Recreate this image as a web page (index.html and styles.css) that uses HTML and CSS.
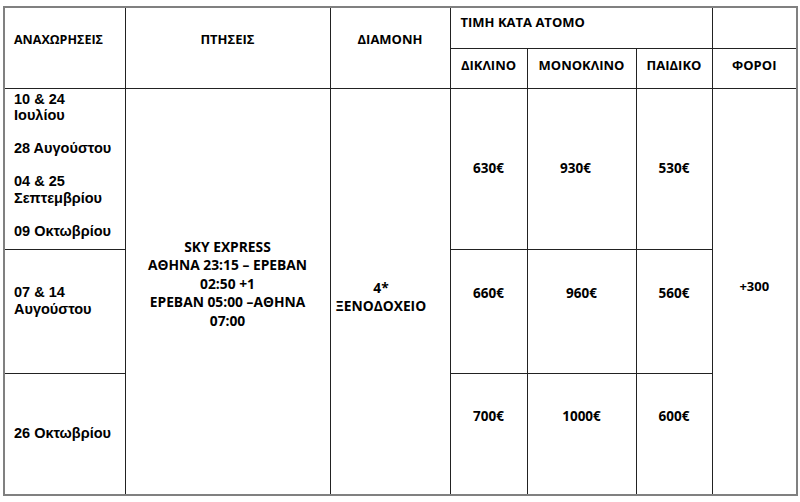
FILE: index.html
```html
<!DOCTYPE html>
<html lang="el">
<head>
<meta charset="utf-8">
<title>Τιμές</title>
<link rel="stylesheet" href="styles.css">
</head>
<body>
<table class="prices">
  <colgroup>
    <col class="c1"><col class="c2"><col class="c3"><col class="c4"><col class="c5"><col class="c6"><col class="c7">
  </colgroup>
  <tr class="r1">
    <th rowspan="2" class="h-dep">ΑΝΑΧΩΡΗΣΕΙΣ</th>
    <th rowspan="2" class="h-main">ΠΤΗΣΕΙΣ</th>
    <th rowspan="2" class="h-main">ΔΙΑΜΟΝΗ</th>
    <th colspan="3" class="h-price">ΤΙΜΗ ΚΑΤΑ ΑΤΟΜΟ</th>
    <th class="h-empty"></th>
  </tr>
  <tr class="r2">
    <th class="h-sub">ΔΙΚΛΙΝΟ</th>
    <th class="h-sub">ΜΟΝΟΚΛΙΝΟ</th>
    <th class="h-sub">ΠΑΙΔΙΚΟ</th>
    <th class="h-sub">ΦΟΡΟΙ</th>
  </tr>
  <tr class="r3">
    <td class="dates dates-1">10 &amp; 24<br>Ιουλίου<br><br>28 Αυγούστου<br><br>04 &amp; 25<br>Σεπτεμβρίου<br><br>09 Οκτωβρίου</td>
    <td rowspan="3" class="flights">SKY EXPRESS<br>ΑΘΗΝΑ 23:15 – ΕΡΕΒΑΝ<br>02:50 +1<br>ΕΡΕΒΑΝ 05:00 –ΑΘΗΝΑ<br>07:00</td>
    <td rowspan="3" class="hotel">4*<br>ΞΕΝΟΔΟΧΕΙΟ</td>
    <td class="price p1">630€</td>
    <td class="price p1 shift">930€</td>
    <td class="price p1">530€</td>
    <td rowspan="3" class="tax">+300</td>
  </tr>
  <tr class="r4">
    <td class="dates dates-2">07 &amp; 14<br>Αυγούστου</td>
    <td class="price p2">660€</td>
    <td class="price p2">960€</td>
    <td class="price p2">560€</td>
  </tr>
  <tr class="r5">
    <td class="dates dates-3">26 Οκτωβρίου</td>
    <td class="price p3">700€</td>
    <td class="price p3">1000€</td>
    <td class="price p3">600€</td>
  </tr>
</table>
</body>
</html>
```
FILE: styles.css
```css
html, body {
  margin: 0;
  padding: 0;
  background: #ffffff;
}
body {
  padding: 6px 0 0 3px;
  font-family: "Open Sans", "Liberation Sans", sans-serif;
  color: #000;
}
.prices {
  border-collapse: collapse;
  table-layout: fixed;
  width: 793px;
  border: 2px solid #808080;
}
.c1 { width: 121px; }
.c2 { width: 205px; }
.c3 { width: 120px; }
.c4 { width: 77px; }
.c5 { width: 109px; }
.c6 { width: 76px; }
.c7 { width: 85px; }
.prices th, .prices td {
  border: 1px solid #222;
  padding: 0;
  font-weight: 700;
  font-size: 13px;
  line-height: 15px;
  text-align: center;
  vertical-align: middle;
  overflow: hidden;
}
.prices .r1 { height: 41px; }
.prices .r2 { height: 40px; }
.prices .r3 { height: 161px; }
.prices .r4 { height: 124px; }
.prices .r5 { height: 122px; }
.prices .h-dep {
  font-size: 12.5px;
  text-align: left;
  padding: 0 0 17px 9px;
}
.prices .h-main { padding-bottom: 17px; }
.prices .h-price {
  text-align: left;
  padding: 0 0 11px 10px;
}
.prices .h-sub { padding-bottom: 6px; }
.prices .dates {
  font-family: "Liberation Sans", Arial, sans-serif;
  font-size: 14.5px;
  line-height: 16.6px;
  text-align: left;
  padding-left: 9px;
}
.prices .dates-1 {
  vertical-align: top;
  padding-top: 2px;
}
.prices .dates-2 { padding-bottom: 20px; }
.prices .flights {
  font-size: 13.8px;
  line-height: 18.5px;
  padding-bottom: 15px;
}
.prices .hotel {
  font-size: 13.8px;
  line-height: 18px;
  padding-top: 11px;
  padding-right: 18px;
}
.prices .price { font-size: 13.5px; }
.prices .p2 { padding-bottom: 36px; }
.prices .p3 { padding-bottom: 34px; }
.prices .shift { padding-right: 12px; }
.prices .tax {
  font-size: 13px;
  padding-bottom: 9px;
}
```
